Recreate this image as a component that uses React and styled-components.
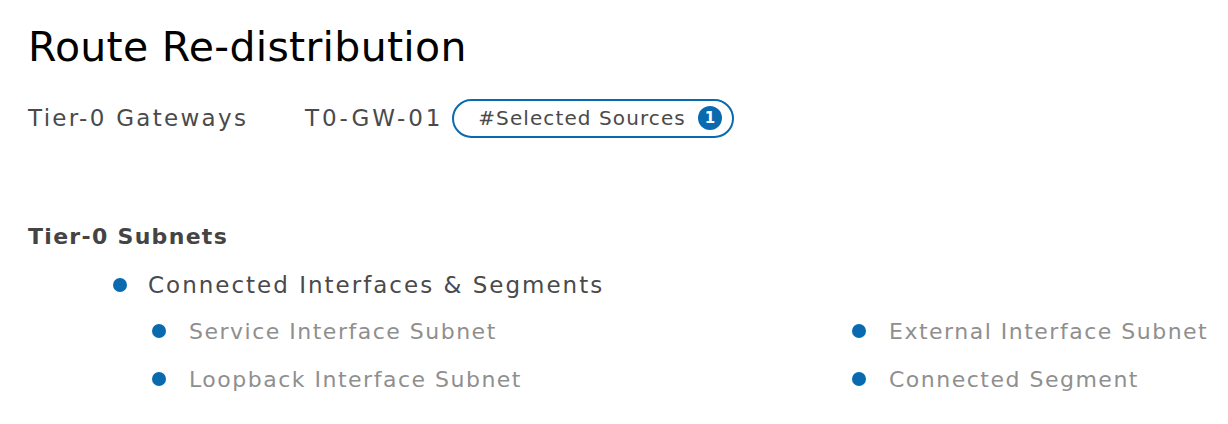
import React from "react";
import styled, { createGlobalStyle } from "styled-components";

const GlobalStyle = createGlobalStyle`
  body {
    margin: 0;
    background: #ffffff;
    font-family: "DejaVu Sans", sans-serif;
  }
`;

const Page = styled.div`
  padding: 19px 0 0 28px;
  width: 1228px;
  height: 424px;
  box-sizing: border-box;
`;

const Title = styled.h1`
  margin: 0;
  font-size: 41px;
  font-weight: 400;
  line-height: 56px;
  letter-spacing: 0.3px;
  color: #000;
`;

const GatewayRow = styled.div`
  display: flex;
  align-items: center;
  margin-top: 23px;
  height: 40px;
  font-size: 23px;
  color: #4a4a4a;
`;

const Label = styled.span`
  width: 277px;
  letter-spacing: 2.3px;
`;

const Value = styled.span`
  margin-right: 9px;
  letter-spacing: 2.9px;
`;

const Pill = styled.div`
  display: flex;
  align-items: center;
  gap: 12px;
  height: 39px;
  box-sizing: border-box;
  padding: 0 10px 0 24px;
  border: 2px solid #0a6ab0;
  border-radius: 20px;
  font-size: 20px;
  letter-spacing: 1.1px;
  color: #4a4a4a;
`;

const Count = styled.span`
  display: inline-flex;
  align-items: center;
  justify-content: center;
  width: 24px;
  height: 24px;
  border-radius: 50%;
  background: #0a6ab0;
  color: #fff;
  font-size: 15px;
  font-weight: 600;
  letter-spacing: 0;
`;

const SectionTitle = styled.h2`
  margin: 83px 0 0;
  font-size: 22px;
  font-weight: 700;
  line-height: 32px;
  letter-spacing: 1.3px;
  color: #444;
`;

const Item = styled.div`
  display: flex;
  align-items: center;
  gap: ${(p) => (p.sub ? "23px" : "21px")};
  height: ${(p) => (p.sub ? "48px" : "45px")};
  font-size: ${(p) => (p.sub ? "22px" : "23px")};
  letter-spacing: ${(p) => (p.sub ? "1.5px" : "2px")};
  color: ${(p) => (p.sub ? "#8f8f8f" : "#4a4a4a")};

  &::before {
    content: "";
    width: 14px;
    height: 14px;
    border-radius: 50%;
    background: #0a6ab0;
    flex: none;
  }
`;

const TopList = styled.div`
  padding-left: 85px;
  margin-top: 9px;
`;

const SubGrid = styled.div`
  display: grid;
  grid-template-columns: 700px auto;
  padding-left: 124px;
`;

export default function App() {
  return (
    <Page>
      <GlobalStyle />
      <Title>Route Re-distribution</Title>
      <GatewayRow>
        <Label>Tier-0 Gateways</Label>
        <Value>T0-GW-01</Value>
        <Pill>
          #Selected Sources
          <Count>1</Count>
        </Pill>
      </GatewayRow>
      <SectionTitle>Tier-0 Subnets</SectionTitle>
      <TopList>
        <Item>Connected Interfaces &amp; Segments</Item>
      </TopList>
      <SubGrid>
        <Item sub>Service Interface Subnet</Item>
        <Item sub>External Interface Subnet</Item>
        <Item sub>Loopback Interface Subnet</Item>
        <Item sub>Connected Segment</Item>
      </SubGrid>
    </Page>
  );
}
